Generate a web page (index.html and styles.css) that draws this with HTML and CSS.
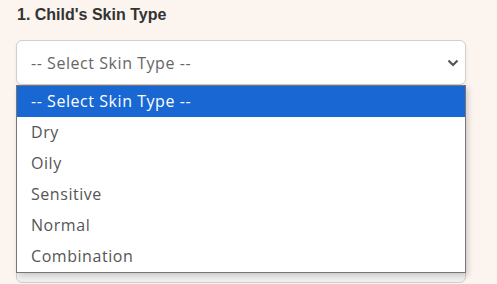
FILE: index.html
```html
<!DOCTYPE html>
<html>
<head>
<meta charset="utf-8">
<link rel="stylesheet" href="styles.css">
</head>
<body>
<div class="form">
  <div class="field">
    <h3 class="label">1. Child's Skin Type</h3>
    <div class="select-wrap">
      <div class="select">
        <span class="select-text">-- Select Skin Type --</span>
        <svg class="chev" width="12" height="8" viewBox="0 0 12 8"><path d="M1.5 1.5 L6 6 L10.5 1.5" fill="none" stroke="#555" stroke-width="2.2"/></svg>
      </div>
      <ul class="menu">
        <li class="opt active">-- Select Skin Type --</li>
        <li class="opt">Dry</li>
        <li class="opt">Oily</li>
        <li class="opt">Sensitive</li>
        <li class="opt">Normal</li>
        <li class="opt">Combination</li>
      </ul>
    </div>
  </div>
  <div class="field next">
    <div class="next-box"></div>
  </div>
</div>
</body>
</html>
```

FILE: styles.css
```css
html, body {
  margin: 0;
  padding: 0;
  background: #fcf4ef;
}
.form {
  padding: 6px 31px 0 16px;
  font-family: "Open Sans", sans-serif;
}
.label {
  margin: 0 0 0 1px;
  font-family: "Liberation Sans", Arial, sans-serif;
  font-weight: bold;
  font-size: 16px;
  line-height: 18px;
  color: #333;
}
.select-wrap {
  position: relative;
  margin-top: 16px;
}
.select {
  box-sizing: border-box;
  height: 45px;
  background: #fff;
  border: 1px solid #cfcfcf;
  border-radius: 6px;
  display: flex;
  align-items: center;
  justify-content: space-between;
  padding: 0 6px 0 14px;
  box-shadow: 0 2px 4px rgba(0,0,0,0.05);
}
.select-text {
  font-size: 16px;
  color: #666;
  letter-spacing: 0.55px;
}
.chev { display: block; }
.menu {
  position: absolute;
  left: 0;
  right: 0;
  top: 45px;
  margin: 0;
  padding: 0;
  list-style: none;
  background: #fff;
  border: 1px solid #767676;
  box-shadow: 2px 3px 6px rgba(0,0,0,0.18);
  z-index: 2;
}
.opt {
  height: 31px;
  line-height: 31px;
  padding-left: 14px;
  font-size: 16px;
  color: #555;
  letter-spacing: 0.55px;
}
.opt.active {
  background: #1967d2;
  color: #fff;
}
.next {
  margin-top: 170px;
}
.next-box {
  box-sizing: border-box;
  height: 28px;
  background: linear-gradient(#fff, #f0f0f0);
  border: 1px solid #cfcfcf;
  border-radius: 0 0 6px 6px;
}
```
